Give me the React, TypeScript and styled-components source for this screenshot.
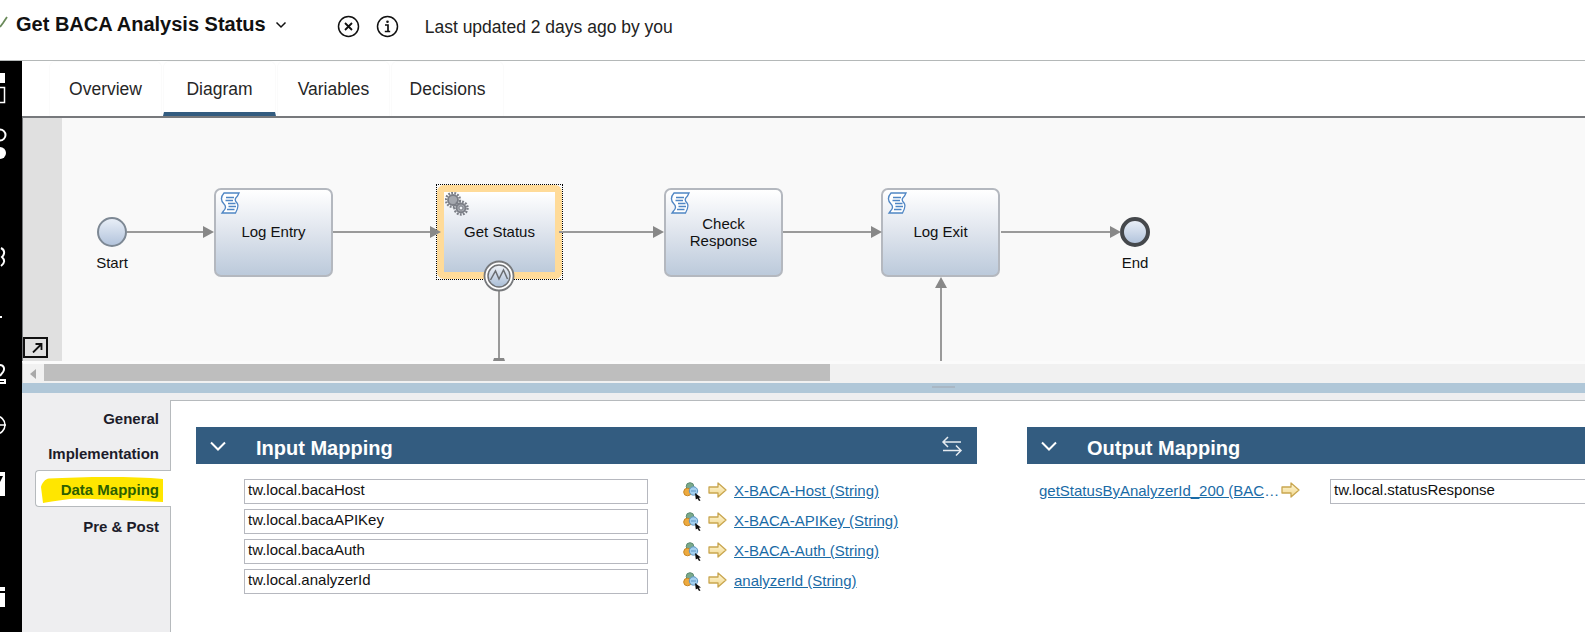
import React from "react";
import styled, { createGlobalStyle } from "styled-components";

const Global = createGlobalStyle`
  html, body { margin: 0; padding: 0; background: #fff; }
  body { font-family: "Liberation Sans", Arial, sans-serif; color: #161616; overflow: hidden; }
  * { box-sizing: border-box; }
`;

const Page = styled.div`
  width: 1585px;
  height: 632px;
  display: flex;
  flex-direction: column;
  overflow: hidden;
`;

const TopBar = styled.header`
  height: 61px;
  flex: none;
  display: flex;
  align-items: flex-start;
  border-bottom: 1px solid #b4b8b8;
  padding-top: 12px;
`;
const LeafSlot = styled.div`
  width: 16px;
  height: 24px;
  flex: none;
`;
const Title = styled.h1`
  margin: 0;
  font-size: 20px;
  line-height: 24px;
  font-weight: 700;
  color: #111;
`;
const TitleCaret = styled.div`
  margin: 5px 0 0 9px;
  height: 14px;
  flex: none;
`;
const RoundIcons = styled.div`
  display: flex;
  gap: 16px;
  margin: 3px 0 0 50px;
`;
const Updated = styled.div`
  margin: 4px 0 0 26px;
  font-size: 17.5px;
  line-height: 22px;
  color: #222;
`;

const Body = styled.div`
  flex: 1;
  display: flex;
  min-height: 0;
`;
const Sidebar = styled.nav`
  width: 22px;
  flex: none;
  background: #000;
  overflow: hidden;
`;
const Main = styled.main`
  flex: 1;
  min-width: 0;
  display: flex;
  flex-direction: column;
`;

const Tabs = styled.div`
  height: 55px;
  flex: none;
  display: flex;
  padding-left: 27px;
  gap: 1px;
`;
const Tab = styled.div<{ $active?: boolean }>`
  width: 113px;
  height: 55px;
  display: flex;
  align-items: flex-start;
  justify-content: center;
  padding-top: 16px;
  font-size: 17.5px;
  line-height: 22px;
  color: #262626;
  border-radius: 6px 6px 0 0;
  border: 1px solid #fbfbfb;
  border-bottom: ${(p) => (p.$active ? "4px solid #335c80" : "none")};
`;

const Canvas = styled.section`
  height: 245px;
  flex: none;
  position: relative;
  display: flex;
  margin-left: 0;
  border-top: 2px solid #77797c;
  border-left: 1px solid #77797c;
  overflow: hidden;
`;
const Gutter = styled.div`
  width: 39px;
  flex: none;
  background: #e0e0e0;
`;
const Surface = styled.div`
  flex: 1;
  position: relative;
  background: #f9f9f9;
`;
const Expand = styled.div`
  position: absolute;
  left: 0;
  bottom: 3px;
  width: 25px;
  height: 21px;
  background: #e2e2e2;
  border: 2px solid #111;
  display: flex;
  align-items: center;
  justify-content: flex-end;
  padding-right: 3px;
`;
const Wires = styled.svg`
  position: absolute;
  left: 0;
  top: 0;
  pointer-events: none;
`;
const EventCircle = styled.div<{ $left: number; $end?: boolean }>`
  position: absolute;
  left: ${(p) => p.$left}px;
  top: 99px;
  width: 30px;
  height: 30px;
  border-radius: 50%;
  background: linear-gradient(#e8eef7, #b3c4dc);
  border: ${(p) => (p.$end ? "4px solid #45484c" : "2px solid #7d8894")};
`;
const EventLabel = styled.div<{ $center: number }>`
  position: absolute;
  left: ${(p) => p.$center - 40}px;
  top: 135px;
  width: 80px;
  text-align: center;
  font-size: 15px;
  line-height: 20px;
  color: #111;
`;
const Task = styled.div<{ $left: number }>`
  position: absolute;
  left: ${(p) => p.$left}px;
  top: 70px;
  width: 119px;
  height: 89px;
  padding-bottom: 2px;
  border: 2px solid #b4b8bf;
  border-radius: 7px;
  background: linear-gradient(#ffffff 0%, #e2e7ef 45%, #bccadb 100%);
  display: flex;
  align-items: center;
  justify-content: center;
  text-align: center;
  font-size: 15px;
  line-height: 17px;
  color: #111;
`;
const TaskIcon = styled.div`
  position: absolute;
  left: 3px;
  top: 1px;
  width: 22px;
  height: 24px;
`;
const Selection = styled.div`
  position: absolute;
  left: 374px;
  top: 66px;
  width: 127px;
  height: 96px;
  border: 1px dotted #000;
`;
const SelectedTask = styled.div`
  width: 100%;
  height: 100%;
  padding-bottom: 2px;
  border: 7px solid #ffdb99;
  border-radius: 7px;
  background: linear-gradient(#ffffff 0%, #e2e7ef 45%, #bccadb 100%);
  display: flex;
  align-items: center;
  justify-content: center;
  font-size: 15px;
  color: #111;
  position: relative;
`;
const SelectedIcon = styled.div`
  position: absolute;
  left: 1px;
  top: 0;
  width: 26px;
  height: 26px;
`;
const Boundary = styled.svg`
  position: absolute;
  left: 421px;
  top: 142px;
`;

const ScrollBar = styled.div`
  height: 22px;
  flex: none;
  display: flex;
  align-items: center;
  padding-left: 7px;
  background: #f1f1f1;
  border-top: 3px solid #fbfbfb;
  border-left: 1px solid #c9c9c9;
`;
const ScrollArrow = styled.div`
  width: 0;
  height: 0;
  border-top: 5px solid transparent;
  border-bottom: 5px solid transparent;
  border-right: 6px solid #a9a9a9;
  margin-right: 8px;
`;
const ScrollThumb = styled.div`
  width: 786px;
  height: 17px;
  margin-bottom: 2px;
  background: #bebebe;
`;
const Splitter = styled.div`
  height: 10px;
  flex: none;
  background: #b0c7d8;
  display: flex;
  justify-content: center;
  padding: 3px 0 0 279px;
`;
const Grip = styled.div`
  width: 23px;
  height: 2px;
  background: #a9b7c4;
`;

const Lower = styled.div`
  flex: 1;
  min-height: 0;
  display: flex;
  background: #eeeef0;
  padding-top: 7px;
`;
const Rail = styled.div`
  width: 148px;
  flex: none;
  display: flex;
  flex-direction: column;
`;
const RailItem = styled.div<{ $height: number }>`
  height: ${(p) => p.$height}px;
  flex: none;
  display: flex;
  align-items: center;
  justify-content: flex-end;
  padding-right: 11px;
  font-size: 15px;
  font-weight: 700;
  color: #1c1c2a;
`;
const RailActive = styled.div`
  position: relative;
  z-index: 1;
  height: 37px;
  flex: none;
  margin: 1px -1px 0 13px;
  padding: 1px 12px 0 0;
  display: flex;
  align-items: center;
  justify-content: flex-end;
  background: #fff;
  border: 1px solid #b6babd;
  border-right: none;
  border-radius: 4px 0 0 4px;
  font-size: 15px;
  font-weight: 700;
  color: #2c5f00;
`;
const Marker = styled.svg`
  position: absolute;
  left: 4px;
  top: 6px;
`;
const RailLabel = styled.span`
  position: relative;
`;
const Content = styled.div`
  flex: 1;
  min-width: 0;
  display: flex;
  gap: 50px;
  padding: 26px 0 0 25px;
  background: #fff;
  border-top: 1px solid #b6babd;
  border-left: 1px solid #b6babd;
  overflow: hidden;
`;
const InputPanel = styled.section`
  width: 781px;
  flex: none;
`;
const OutputPanel = styled.section`
  flex: 1;
  min-width: 0;
`;
const PanelHeader = styled.div`
  height: 37px;
  display: flex;
  align-items: center;
  background: #335c80;
  color: #fff;
  padding-left: 14px;
`;
const HeaderCaret = styled.svg`
  flex: none;
  margin-right: 30px;
`;
const HeaderTitle = styled.h2`
  margin: 0;
  padding-top: 6px;
  font-size: 20px;
  font-weight: 700;
  flex: 1;
  white-space: nowrap;
`;
const HeaderAction = styled.svg`
  margin-right: 14px;
  flex: none;
`;
const Rows = styled.div`
  display: flex;
  flex-direction: column;
  gap: 5px;
  padding: 15px 0 0 48px;
`;
const MapRow = styled.div`
  height: 25px;
  display: flex;
  align-items: center;
`;
const Field = styled.div<{ $width: number }>`
  width: ${(p) => p.$width}px;
  height: 25px;
  flex: none;
  border: 1px solid #b6b8bf;
  padding-left: 3px;
  font-size: 15px;
  line-height: 20px;
  color: #111;
  background: #fff;
`;
const Picker = styled.svg`
  margin: 0 0 0 35px;
  flex: none;
`;
const GoldArrow = styled.svg<{ $gap: number }>`
  margin: 0 0 3px ${(p) => p.$gap}px;
  flex: none;
`;
const MapLink = styled.a`
  margin: 0 0 2px 7px;
  font-size: 15px;
  color: #1a6ba6;
  text-decoration: underline;
  white-space: nowrap;
`;
const OutputRow = styled.div`
  height: 25px;
  margin-top: 15px;
  padding-left: 12px;
  display: flex;
  align-items: center;
`;
const OutputLink = styled.a`
  width: 242px;
  flex: none;
  margin-bottom: 2px;
  overflow: hidden;
  text-overflow: ellipsis;
  white-space: nowrap;
  font-size: 15px;
  color: #1a6ba6;
  text-decoration: underline;
`;
const OutputField = styled(Field)`
  margin-left: 30px;
`;

const ScriptGlyph = () => (
  <svg width="22" height="24" viewBox="0 0 22 24" fill="none" stroke="#4f86c4" strokeWidth="1.3">
    <path d="M5 2H20L18.5 5C15.5 8 15.5 9.5 18 12C20 14.5 19 17.5 16.5 22H3L4.5 20C7 17.5 7.5 15.5 5 13C2 10 1.5 6 5 2Z" fill="#fff" />
    <path d="M7 6.5H15M6.5 9.5H14M9 12.5H16.5M9.5 15.5H17M8 18.5H15.5" />
  </svg>
);

const Gear = ({ cx, cy, r }: { cx: number; cy: number; r: number }) => (
  <g fill="none">
    <circle cx={cx} cy={cy} r={r} stroke="#7b7e86" strokeWidth="2.4" strokeDasharray="1.8 1.3" />
    <circle cx={cx} cy={cy} r={r - 2} fill="#a4a7ae" stroke="#7b7e86" strokeWidth="1.8" />
  </g>
);

const GearsGlyph = () => (
  <svg width="26" height="26" viewBox="0 0 26 26">
    <Gear cx={8} cy={8} r={7} />
    <Gear cx={16} cy={16} r={6.5} />
    <circle cx="16" cy="16" r="2" fill="#eef1f5" stroke="#7b7e86" />
  </svg>
);

const GoldIcon = ({ gap }: { gap: number }) => (
  <GoldArrow $gap={gap} width="19" height="16" viewBox="0 0 19 16">
    <defs>
      <linearGradient id="gold" x1="0" y1="0" x2="0" y2="1">
        <stop offset="0" stopColor="#fff8d8" />
        <stop offset="1" stopColor="#f0d68c" />
      </linearGradient>
    </defs>
    <path d="M1 5H10V1L18 8L10 15V11H1Z" fill="url(#gold)" stroke="#c9a64f" strokeWidth="1.3" strokeLinejoin="round" />
  </GoldArrow>
);

const PickerIcon = () => (
  <Picker width="19" height="19" viewBox="0 0 19 19">
    <circle cx="7" cy="4.5" r="3.8" fill="#79a98c" stroke="#5d8a70" />
    <circle cx="4.5" cy="10" r="3.8" fill="#eeaa3e" stroke="#c68726" />
    <circle cx="10.5" cy="9" r="4.2" fill="#a4cfee" stroke="#5f97c4" />
    <path d="M8 9H13" stroke="#5f97c4" />
    <path d="M12 11L18 15.5L15.8 15.8L17.5 18.5L16 19L14.5 16.5L12.8 17.5Z" fill="#111" />
  </Picker>
);

const Caret = () => (
  <HeaderCaret width="16" height="10" viewBox="0 0 16 10" fill="none" stroke="#fff" strokeWidth="2">
    <path d="M1 1.5L8 8.5L15 1.5" />
  </HeaderCaret>
);

const rows = [
  ["tw.local.bacaHost", "X-BACA-Host (String)"],
  ["tw.local.bacaAPIKey", "X-BACA-APIKey (String)"],
  ["tw.local.bacaAuth", "X-BACA-Auth (String)"],
  ["tw.local.analyzerId", "analyzerId (String)"],
];

const Head = ({ x, y, dir }: { x: number; y: number; dir: "r" | "u" }) =>
  dir === "r" ? (
    <path d={`M${x} ${y}L${x - 11} ${y - 6}V${y + 6}Z`} fill="#888" />
  ) : (
    <path d={`M${x} ${y}L${x - 6} ${y + 11}H${x + 6}Z`} fill="#888" />
  );

export default function App() {
  return (
    <Page>
      <Global />
      <TopBar>
        <LeafSlot>
          <svg width="16" height="24" viewBox="0 0 16 24" fill="none">
            <path d="M0 15L3 11L7 5" stroke="#6a8a5a" strokeWidth="1.8" />
          </svg>
        </LeafSlot>
        <Title>Get BACA Analysis Status</Title>
        <TitleCaret>
          <svg width="12" height="12" viewBox="0 0 12 12" fill="none" stroke="#111" strokeWidth="1.5">
            <path d="M1.5 3.5L6 8L10.5 3.5" />
          </svg>
        </TitleCaret>
        <RoundIcons>
          <svg width="23" height="23" viewBox="0 0 23 23" fill="none" stroke="#111" strokeWidth="1.5">
            <circle cx="11.5" cy="11.5" r="10" />
            <path d="M8 8L15 15M15 8L8 15" strokeWidth="1.8" />
          </svg>
          <svg width="23" height="23" viewBox="0 0 23 23" fill="none" stroke="#111" strokeWidth="1.5">
            <circle cx="11.5" cy="11.5" r="10" />
            <circle cx="11.5" cy="6.8" r="1.3" fill="#111" stroke="none" />
            <path d="M9 10H12V16.5M8.8 16.5H14.2" strokeWidth="1.7" />
          </svg>
        </RoundIcons>
        <Updated>Last updated 2 days ago by you</Updated>
      </TopBar>
      <Body>
        <Sidebar>
          <svg width="22" height="571" viewBox="0 61 22 571">
            <rect x="0" y="73" width="5" height="10" fill="#fff" />
            <rect x="-3" y="87.5" width="7.5" height="15" fill="none" stroke="#fff" strokeWidth="1.5" />
            <circle cx="0" cy="135" r="5.5" fill="none" stroke="#fff" strokeWidth="2" />
            <circle cx="0" cy="153" r="6" fill="#fff" />
            <path d="M1 248C5 250 5 254 2 257C5 260 5 263 1 266" fill="none" stroke="#fff" strokeWidth="2" />
            <rect x="0" y="316" width="2" height="2" fill="#fff" />
            <path d="M0 365C4 365 5 369 3 372L0 376M0 380H5V383H0" fill="none" stroke="#fff" strokeWidth="2" />
            <circle cx="-4" cy="425" r="9" fill="none" stroke="#fff" strokeWidth="1.5" />
            <path d="M0 425H6" stroke="#fff" strokeWidth="1.5" />
            <path d="M0 472H5V496H0ZM0 476V482L3 476Z" fill="#fff" fillRule="evenodd" />
            <rect x="0" y="587" width="5" height="4" fill="#fff" />
            <rect x="0" y="593" width="5" height="14" fill="#fff" />
          </svg>
        </Sidebar>
        <Main>
          <Tabs>
            <Tab>Overview</Tab>
            <Tab $active>Diagram</Tab>
            <Tab>Variables</Tab>
            <Tab>Decisions</Tab>
          </Tabs>
          <Canvas>
            <Gutter />
            <Surface>
              <EventCircle $left={35} />
              <EventLabel $center={50}>Start</EventLabel>
              <Task $left={152}>
                <TaskIcon><ScriptGlyph /></TaskIcon>
                Log Entry
              </Task>
              <Selection>
                <SelectedTask>
                  <SelectedIcon><GearsGlyph /></SelectedIcon>
                  Get Status
                </SelectedTask>
              </Selection>
              <Task $left={602}>
                <TaskIcon><ScriptGlyph /></TaskIcon>
                Check<br />Response
              </Task>
              <Task $left={819}>
                <TaskIcon><ScriptGlyph /></TaskIcon>
                Log Exit
              </Task>
              <EventCircle $left={1058} $end />
              <EventLabel $center={1073}>End</EventLabel>
              <Wires width="1523" height="243" viewBox="0 0 1523 243" fill="none" stroke="#9a9a9a" strokeWidth="2">
                <path d="M65 114H142M271 114H369M497 114H592M721 114H810M939 114H1048M879 169V243M437 173V241" />
                <g stroke="none">
                  <Head x={152} y={114} dir="r" />
                  <Head x={379} y={114} dir="r" />
                  <Head x={602} y={114} dir="r" />
                  <Head x={820} y={114} dir="r" />
                  <Head x={1059} y={114} dir="r" />
                  <Head x={879} y={159} dir="u" />
                  <path d="M432 240H442L443 243H431Z" fill="#888" />
                </g>
              </Wires>
              <Boundary width="32" height="32" viewBox="0 0 32 32">
                <defs>
                  <linearGradient id="boundary" x1="0" y1="0" x2="0" y2="1">
                    <stop offset="0" stopColor="#f0f3f8" />
                    <stop offset="1" stopColor="#a9bdd6" />
                  </linearGradient>
                </defs>
                <circle cx="16" cy="16" r="14.5" fill="#fff" stroke="#77797c" strokeWidth="1.8" />
                <circle cx="16" cy="16" r="11" fill="url(#boundary)" stroke="#6f7174" strokeWidth="1.5" />
                <path d="M7.5 20L12.5 11L16 19L20.5 10L24.5 19" fill="none" stroke="#6a6d72" strokeWidth="1.5" />
              </Boundary>
            </Surface>
            <Expand>
              <svg width="11" height="10" viewBox="0 0 11 10" fill="none" stroke="#111" strokeWidth="1.8">
                <path d="M1 9.5L9 1.5M3.5 1H9.5V7" />
              </svg>
            </Expand>
          </Canvas>
          <ScrollBar>
            <ScrollArrow />
            <ScrollThumb />
          </ScrollBar>
          <Splitter><Grip /></Splitter>
          <Lower>
            <Rail>
              <RailItem $height={37}>General</RailItem>
              <RailItem $height={32}>Implementation</RailItem>
              <RailActive>
                <Marker width="124" height="27" viewBox="0 0 124 27">
                  <path d="M1 10C2 6 5 2 9 1.5C40 0 90 -1 123 2L123 25C90 24 50 21 30 22C20 23 10 25 3 26Z" fill="#ffe600" />
                </Marker>
                <RailLabel>Data Mapping</RailLabel>
              </RailActive>
              <RailItem $height={38}>Pre &amp; Post</RailItem>
            </Rail>
            <Content>
              <InputPanel>
                <PanelHeader>
                  <Caret />
                  <HeaderTitle>Input Mapping</HeaderTitle>
                  <HeaderAction width="22" height="20" viewBox="0 0 22 20" fill="none" stroke="#e6ebf0" strokeWidth="1.5">
                    <path d="M20 6H2M7 1L2 6L7 11M2 14.5H20M15 9.5L20 14.5L15 19.5" />
                  </HeaderAction>
                </PanelHeader>
                <Rows>
                  {rows.map(([value, link]) => (
                    <MapRow key={value}>
                      <Field $width={404}>{value}</Field>
                      <PickerIcon />
                      <GoldIcon gap={6} />
                      <MapLink>{link}</MapLink>
                    </MapRow>
                  ))}
                </Rows>
              </InputPanel>
              <OutputPanel>
                <PanelHeader>
                  <Caret />
                  <HeaderTitle>Output Mapping</HeaderTitle>
                </PanelHeader>
                <OutputRow>
                  <OutputLink>getStatusByAnalyzerId_200 (BACA_Res)</OutputLink>
                  <GoldIcon gap={0} />
                  <OutputField $width={400}>tw.local.statusResponse</OutputField>
                </OutputRow>
              </OutputPanel>
            </Content>
          </Lower>
        </Main>
      </Body>
    </Page>
  );
}
